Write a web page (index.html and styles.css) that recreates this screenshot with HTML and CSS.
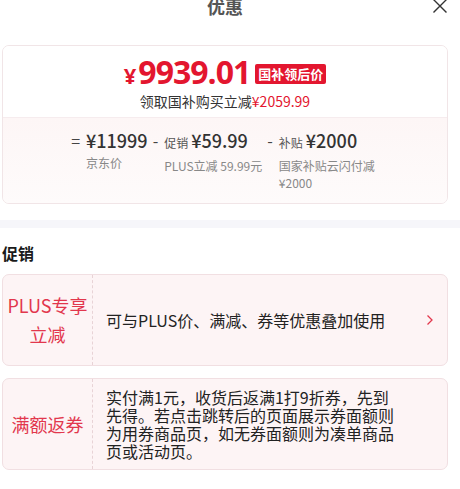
FILE: index.html
```html
<!DOCTYPE html>
<html lang="zh-CN">
  <head>
    <meta charset="UTF-8" />
    <meta name="viewport" content="width=device-width, initial-scale=1.0" />
    <title>优惠</title>
    <link rel="stylesheet" href="styles.css">
  </head>
  <body>
    <div class="page">
      <div class="header">
        <span></span>
        <h1 class="title">优惠</h1>
        <button class="close" aria-label="关闭">
          <svg width="16" height="16" viewBox="0 0 16 16">
            <path d="M1.5 1.5 L14.5 14.5 M14.5 1.5 L1.5 14.5" stroke="#333" stroke-width="1.4" fill="none" />
          </svg>
        </button>
      </div>

      <div class="price-card">
        <div class="price-top">
          <div class="price-line">
            <span class="price"><span class="yen">¥</span>9939.01</span>
            <span class="badge">国补领后价</span>
          </div>
          <div class="price-sub">领取国补购买立减<span class="red">¥2059.99</span></div>
        </div>
        <div class="price-bottom">
          <div class="calc">
            <span class="op">=</span>
            <div class="calc-body">
              <div class="amount">¥11999</div>
              <div class="note">京东价</div>
            </div>
          </div>
          <div class="calc">
            <span class="op">-</span>
            <div class="calc-body">
              <div class="amount"><span class="tag">促销</span>¥59.99</div>
              <div class="note">PLUS立减 59.99元</div>
            </div>
          </div>
          <div class="calc">
            <span class="op">-</span>
            <div class="calc-body">
              <div class="amount"><span class="tag">补贴</span>¥2000</div>
              <div class="note wrap">国家补贴云闪付减¥2000</div>
            </div>
          </div>
        </div>
      </div>
    </div>

    <div class="band"></div>

    <div class="page">
      <h2 class="section-title">促销</h2>

      <div class="promo">
        <div class="promo-label">PLUS专享<br>立减</div>
        <div class="promo-text">可与PLUS价、满减、券等优惠叠加使用</div>
        <svg class="chevron" width="8" height="12" viewBox="0 0 8 12">
          <path d="M1.5 1.5 L6 6 L1.5 10.5" stroke="#e2374d" stroke-width="1.3" fill="none" />
        </svg>
      </div>

      <div class="promo">
        <div class="promo-label">满额返券</div>
        <div class="promo-text">实付满1元，收货后返满1打9折券，先到先得。若点击跳转后的页面展示券面额则为用券商品页，如无券面额则为凑单商品页或活动页。</div>
      </div>
    </div>
  </body>
</html>
```

FILE: styles.css
```css
* {
  padding: 0;
  margin: 0;
  box-sizing: border-box;
}

body {
  font-family: "Noto Sans CJK SC", "Noto Sans", sans-serif;
  background: #fff;
  color: #222;
}

.page {
  padding: 0 12px 0 2px;
}

/* header */

.header {
  display: grid;
  grid-template-columns: 1fr auto 1fr;
  align-items: start;
  height: 47px;
  margin-top: -2px;
}

.title {
  font-size: 18px;
  line-height: 16px;
  font-weight: 700;
  color: #555;
}

.close {
  justify-self: end;
  width: 16px;
  height: 16px;
  border: none;
  background: none;
  display: flex;
}

/* price card */

.price-card {
  border: 1px solid #f1e5e7;
  border-radius: 7px;
  overflow: hidden;
}

.price-top {
  padding: 9px 0 6px;
  text-align: center;
  background: #fff;
}

.price-line {
  display: flex;
  justify-content: center;
  align-items: center;
  gap: 5px;
  height: 36px;
}

.price {
  font-family: "Open Sans", "Noto Sans", sans-serif;
  font-size: 32px;
  font-weight: 700;
  color: #e3162f;
  letter-spacing: -1px;
  line-height: 36px;
}

.yen {
  font-size: 22px;
  margin-right: 3px;
}

.badge {
  background: #e3162f;
  color: #fff;
  font-size: 13px;
  font-weight: 700;
  line-height: 20px;
  padding: 0 3px;
  border-radius: 2px;
  margin-top: 2px;
}

.price-sub {
  font-size: 14px;
  line-height: 20px;
  color: #333;
}

.red {
  color: #e3162f;
}

.price-bottom {
  display: flex;
  justify-content: center;
  gap: 5px;
  padding: 10px 0 12px;
  border-top: 1px solid #f6ecee;
  background: linear-gradient(180deg, #fdf6f6, #fefbfb);
}

.calc {
  display: flex;
  align-items: flex-start;
}

.op {
  font-size: 16px;
  line-height: 24px;
  color: #444;
  margin-right: 6px;
}

.amount {
  font-size: 18px;
  line-height: 24px;
  font-weight: 500;
  color: #333;
  white-space: nowrap;
}

.tag {
  font-size: 12px;
  font-weight: 400;
  color: #555;
  margin-right: 3px;
}

.note {
  font-size: 12px;
  line-height: 17px;
  color: #888;
  margin-top: 2px;
}

.note.wrap {
  width: 100px;
}

/* promotions */

.band {
  height: 8px;
  margin-top: 16px;
  background: #f6f6fa;
}

.section-title {
  font-size: 16px;
  font-weight: 700;
  line-height: 24px;
  color: #1a1a1a;
  margin: 13px 0 9px;
}

.promo {
  display: flex;
  align-items: center;
  min-height: 92px;
  margin-bottom: 12px;
  border: 1px solid #f1dfe2;
  border-radius: 7px;
  background: #fdf4f5;
}

.promo-label {
  align-self: stretch;
  flex: 0 0 90px;
  display: flex;
  align-items: center;
  justify-content: center;
  text-align: center;
  font-size: 18px;
  line-height: 29px;
  color: #e2374d;
  border-right: 1px dashed #e8d3d6;
}

.promo-text {
  width: 305px;
  padding-left: 13px;
  font-size: 16px;
  line-height: 18px;
  color: #222;
}

.chevron {
  margin-left: auto;
  margin-right: 13px;
}
```
